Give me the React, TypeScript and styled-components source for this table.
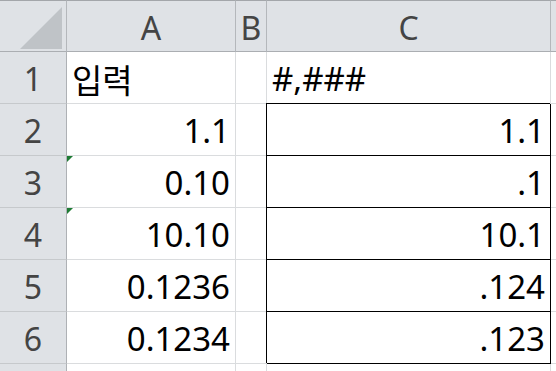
import { Fragment } from "react";
import styled, { createGlobalStyle } from "styled-components";

const GlobalStyle = createGlobalStyle`
  html, body {
    margin: 0;
    padding: 0;
    background: #ffffff;
  }
  body {
    width: 556px;
    height: 371px;
    overflow: hidden;
  }
`;

const Sheet = styled.div`
  display: grid;
  grid-template-columns: 67px 169px 31px 284px 1fr;
  grid-auto-rows: 52px;
  width: 556px;
  height: 371px;
  overflow: hidden;
  font-family: "Noto Sans", "Noto Sans CJK KR", sans-serif;
`;

const HeaderCell = styled.div`
  position: relative;
  box-sizing: border-box;
  display: flex;
  align-items: center;
  justify-content: center;
  background: #dfe2e6;
  border-top: 1px solid #a3a6aa;
  border-bottom: 1px solid #abaeb2;
  border-right: 1px solid #b4b7bb;
  color: #444444;
  font-size: 32px;
  padding-top: 2px;
`;

const CornerMark = styled.div`
  position: absolute;
  left: 20px;
  top: 6px;
  width: 42px;
  height: 42px;
  background: #bfc3c7;
  clip-path: polygon(100% 0, 100% 100%, 0 100%);
`;

const RowHead = styled.div`
  box-sizing: border-box;
  display: flex;
  align-items: center;
  justify-content: center;
  background: #dfe2e6;
  border-right: 1px solid #aeb1b5;
  border-bottom: 1px solid #c6c9cc;
  color: #444444;
  font-size: 32px;
  padding-top: 2px;
`;

const Cell = styled.div<{ $align?: "left" | "right"; $boxed?: boolean; $warn?: boolean }>`
  position: relative;
  box-sizing: border-box;
  display: flex;
  align-items: center;
  justify-content: ${(p) => (p.$align === "right" ? "flex-end" : "flex-start")};
  padding: 2px 5px 0 5px;
  border-right: 1px solid ${(p) => (p.$boxed ? "#000000" : "#dadcde")};
  border-bottom: 1px solid ${(p) => (p.$boxed ? "#000000" : "#dadcde")};
  box-shadow: ${(p) => (p.$boxed ? "-1px -1px 0 #000000" : "none")};
  color: #000000;
  font-size: 33px;
  white-space: nowrap;

  ${(p) =>
    p.$warn &&
    `
    &::before {
      content: "";
      position: absolute;
      left: 0;
      top: 0;
      width: 0;
      height: 0;
      border-top: 6px solid #1e7b34;
      border-right: 6px solid transparent;
    }
  `}
`;

const rows = [
  { a: "1.1", c: "1.1", warn: false },
  { a: "0.10", c: ".1", warn: true },
  { a: "10.10", c: "10.1", warn: true },
  { a: "0.1236", c: ".124", warn: false },
  { a: "0.1234", c: ".123", warn: false },
];

function App() {
  return (
    <>
      <GlobalStyle />
      <Sheet>
        <HeaderCell>
          <CornerMark />
        </HeaderCell>
        <HeaderCell>A</HeaderCell>
        <HeaderCell>B</HeaderCell>
        <HeaderCell>C</HeaderCell>
        <HeaderCell />

        <RowHead>1</RowHead>
        <Cell $align="left">입력</Cell>
        <Cell />
        <Cell $align="left">#,###</Cell>
        <Cell />

        {rows.map((r, i) => (
          <Fragment key={i}>
            <RowHead>{i + 2}</RowHead>
            <Cell $align="right" $warn={r.warn}>
              {r.a}
            </Cell>
            <Cell />
            <Cell $align="right" $boxed>
              {r.c}
            </Cell>
            <Cell />
          </Fragment>
        ))}

        {/* partial row below the data, empty */}
        <RowHead />
        <Cell />
        <Cell />
        <Cell />
        <Cell />
      </Sheet>
    </>
  );
}

export default App;
